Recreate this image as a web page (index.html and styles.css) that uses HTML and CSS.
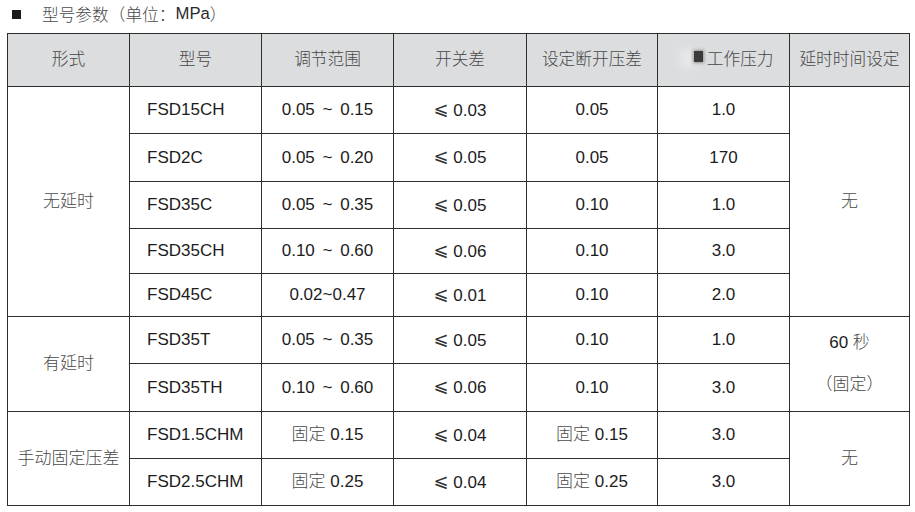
FILE: index.html
```html
<!DOCTYPE html>
<html lang="zh-CN">
<head>
<meta charset="utf-8">
<title>型号参数</title>
<link rel="stylesheet" href="styles.css">
</head>
<body>
<div class="page">
  <div class="title"><span class="sq"></span><span class="cj">型号参数（单位：</span>MPa<span class="cj">）</span></div>
  <table class="spec">
    <colgroup>
      <col class="w122"><col class="w132"><col class="w132"><col class="w133"><col class="w131"><col class="w132"><col class="w120">
    </colgroup>
    <thead>
      <tr class="h53">
        <th>形式</th><th>型号</th><th>调节范围</th><th>开关差</th><th>设定断开压差</th>
        <th><span class="ghost">最</span><span class="ghost blot">高</span>工作压力</th>
        <th>延时时间设定</th>
      </tr>
    </thead>
    <tbody>
      <tr class="h47">
        <td rowspan="5" class="cj">无延时</td><td class="model">FSD15CH</td><td class="rng">0.05 ~ 0.15</td><td><span class="le">⩽</span> 0.03</td><td>0.05</td><td>1.0</td><td rowspan="5" class="cj">无</td>
      </tr>
      <tr class="h48">
        <td class="model">FSD2C</td><td class="rng">0.05 ~ 0.20</td><td><span class="le">⩽</span> 0.05</td><td>0.05</td><td>170</td>
      </tr>
      <tr class="h47">
        <td class="model">FSD35C</td><td class="rng">0.05 ~ 0.35</td><td><span class="le">⩽</span> 0.05</td><td>0.10</td><td>1.0</td>
      </tr>
      <tr class="h45">
        <td class="model">FSD35CH</td><td class="rng">0.10 ~ 0.60</td><td><span class="le">⩽</span> 0.06</td><td>0.10</td><td>3.0</td>
      </tr>
      <tr class="h43">
        <td class="model">FSD45C</td><td>0.02~0.47</td><td><span class="le">⩽</span> 0.01</td><td>0.10</td><td>2.0</td>
      </tr>
      <tr class="h47">
        <td rowspan="2" class="cj">有延时</td><td class="model">FSD35T</td><td class="rng">0.05 ~ 0.35</td><td><span class="le">⩽</span> 0.05</td><td>0.10</td><td>1.0</td>
        <td rowspan="2" class="delay"><div class="ln">60 <span class="cj">秒</span></div><div class="ln cj">（固定）</div></td>
      </tr>
      <tr class="h48">
        <td class="model">FSD35TH</td><td class="rng">0.10 ~ 0.60</td><td><span class="le">⩽</span> 0.06</td><td>0.10</td><td>3.0</td>
      </tr>
      <tr class="h47">
        <td rowspan="2" class="cj">手动固定压差</td><td class="model">FSD1.5CHM</td><td><span class="cj">固定</span> 0.15</td><td><span class="le">⩽</span> 0.04</td><td><span class="cj">固定</span> 0.15</td><td>3.0</td><td rowspan="2" class="cj">无</td>
      </tr>
      <tr class="h47">
        <td class="model">FSD2.5CHM</td><td><span class="cj">固定</span> 0.25</td><td><span class="le">⩽</span> 0.04</td><td><span class="cj">固定</span> 0.25</td><td>3.0</td>
      </tr>
    </tbody>
  </table>
</div>
</body>
</html>
```

FILE: styles.css
```css
html, body {
  margin: 0;
  background: #ffffff;
}
body {
  font-family: "Liberation Sans", "Noto Sans CJK SC", sans-serif;
  font-size: 17px;
  color: #1c1c1c;
}
.page {
  padding-left: 7px;
}
.title {
  height: 28px;
  display: flex;
  align-items: center;
  padding-left: 5px;
  margin-bottom: 5px;
  font-size: 16.7px;
  color: #2a2a2a;
}
.sq {
  width: 9px;
  height: 9px;
  background: #1a1a1a;
  margin-right: 21px;
}
.cj {
  color: #4a4a4a;
  font-weight: 300;
}
.spec {
  border-collapse: collapse;
  table-layout: fixed;
  width: 902px;
}
.w120 { width: 120px; }
.w122 { width: 122px; }
.w131 { width: 131px; }
.w132 { width: 132px; }
.w133 { width: 133px; }
.h43 { height: 43px; }
.h45 { height: 45px; }
.h47 { height: 47px; }
.h48 { height: 48px; }
.h53 { height: 53px; }
.spec th,
.spec td {
  border: 1px solid #2e2e2e;
  padding: 0;
  text-align: center;
  vertical-align: middle;
  line-height: 20px;
}
.spec th {
  background: #dcdddf;
  font-weight: 300;
  color: #474747;
  font-size: 16.7px;
}
.spec td.model {
  text-align: left;
  padding-left: 17px;
}
.rng {
  word-spacing: 3px;
}
.le {
  font-family: "DejaVu Sans", "Noto Sans CJK SC", sans-serif;
  font-size: 18px;
  line-height: 1;
  vertical-align: 1px;
  color: #333;
}
.ghost {
  color: transparent;
  position: relative;
}
.blot::after {
  content: "";
  position: absolute;
  left: 4px;
  top: 1px;
  width: 9px;
  height: 11px;
  background: #3a3a3a;
  box-shadow: 0 0 3px 1px rgba(60, 60, 60, 0.45), -10px 2px 8px 4px rgba(255, 255, 255, 0.35);
}
.delay .ln {
  line-height: 42px;
}
```
